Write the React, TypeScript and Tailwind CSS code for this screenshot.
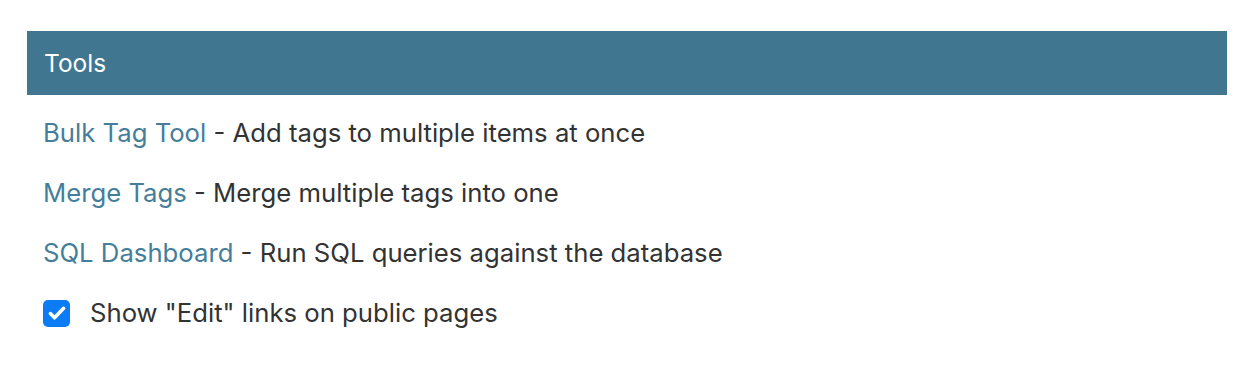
import { useState } from 'react';

const tools = [
  { name: 'Bulk Tag Tool', desc: 'Add tags to multiple items at once' },
  { name: 'Merge Tags', desc: 'Merge multiple tags into one' },
  { name: 'SQL Dashboard', desc: 'Run SQL queries against the database' },
];

export default function App() {
  const [showEdit, setShowEdit] = useState(true);

  return (
    <div className="pl-[27px] pr-[23px] pt-[31px] font-['Inter','Liberation_Sans',sans-serif] text-[25.7px] text-[#333]">
      <h2 className="flex h-[64px] items-center bg-[#417690] px-[17px] text-[24.5px] font-normal text-white">
        Tools
      </h2>
      <ul className="px-[16px] pt-[23px]">
        {tools.map((t) => (
          <li key={t.name} className="h-[60px] leading-[30px]">
            <a href="#" className="text-[#447e9b]">
              {t.name}
            </a>{' '}
            - {t.desc}
          </li>
        ))}
        <li className="flex h-[60px] items-start">
          <label className="flex items-center gap-[20px] leading-[30px]">
            <span
              onClick={() => setShowEdit(!showEdit)}
              className={`flex h-[27px] w-[27px] items-center justify-center rounded-[5px] ${
                showEdit ? 'bg-[#0b7bf6]' : 'border-2 border-gray-400 bg-white'
              }`}
            >
              {showEdit && (
                <svg viewBox="0 0 16 16" className="h-[22px] w-[22px]">
                  <path
                    d="M3.2 8.4l3 3.1L12.8 4.6"
                    fill="none"
                    stroke="white"
                    strokeWidth="2.6"
                    strokeLinecap="round"
                    strokeLinejoin="round"
                  />
                </svg>
              )}
            </span>
            Show "Edit" links on public pages
          </label>
        </li>
      </ul>
    </div>
  );
}
